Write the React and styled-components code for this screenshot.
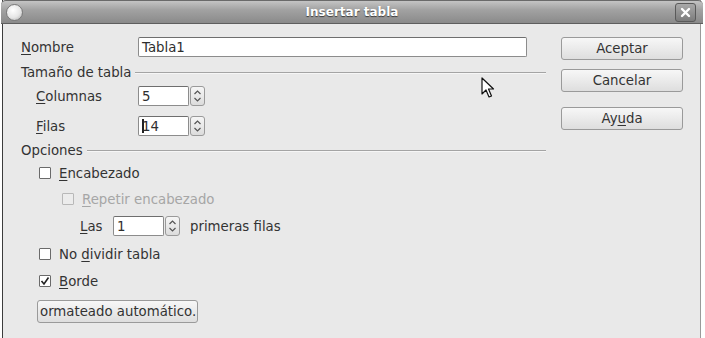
import React from 'react';
import styled, { createGlobalStyle } from 'styled-components';

const GlobalStyle = createGlobalStyle`
  html, body {
    margin: 0;
    padding: 0;
    background: #ffffff;
  }
  body {
    font-family: 'DejaVu Sans', 'Liberation Sans', sans-serif;
    font-size: 13.3px;
    color: #333333;
    width: 705px;
    height: 338px;
    overflow: hidden;
  }
`;

const Window = styled.div`
  margin-left: 2px;
  width: 699px;
  height: 338px;
  display: flex;
  flex-direction: column;
  border-left: 1px solid #3c3c3c;
  border-right: 1px solid #9a9a9a;
  box-sizing: border-box;
  background: #e9e9e9;
`;

const TitleBar = styled.div`
  height: 24px;
  flex: none;
  display: flex;
  align-items: center;
  justify-content: space-between;
  padding: 0 3px;
  box-sizing: border-box;
  background: linear-gradient(#c4c4c4 0%, #a2a2a2 40%, #8a8a8a 100%);
  border-top: 1px solid #6a6a6a;
  border-bottom: 1px solid #5e5e5e;
  border-radius: 5px 5px 0 0;
  margin-left: -2px;
  margin-right: -3px;
`;

const Title = styled.div`
  flex: 1;
  text-align: center;
  color: #ffffff;
  font-weight: bold;
  font-size: 12px;
  text-shadow: 0 1px 1px #3a3a3a;
  margin-left: 6px;
`;

const AppIcon = styled.div`
  width: 15px;
  height: 15px;
  border-radius: 50%;
  background: radial-gradient(circle at 40% 35%, #ffffff 0%, #e6e6e6 55%, #a8a8a8 100%);
  border: 1px solid #7a7a7a;
  margin-left: 2px;
`;

const CloseButton = styled.div`
  width: 21px;
  height: 19px;
  box-sizing: border-box;
  border: 1px solid #5a5a5a;
  border-radius: 3px;
  background: linear-gradient(#a9a9a9, #7c7c7c);
  display: flex;
  align-items: center;
  justify-content: center;
  margin-right: 4px;
`;

const Body = styled.div`
  flex: 1;
  display: flex;
  position: relative;
`;

const Main = styled.div`
  width: 543px;
  flex: none;
  display: flex;
  flex-direction: column;
  padding-left: 18px;
  box-sizing: border-box;
`;

const Side = styled.div`
  display: flex;
  flex-direction: column;
  padding-left: 15px;
  padding-top: 13px;
`;

const Row = styled.div`
  display: flex;
  align-items: center;
  height: ${(p) => p.$h || 16}px;
  margin-top: ${(p) => p.$top || 0}px;
  padding-left: ${(p) => p.$indent || 0}px;
  white-space: nowrap;
`;

const Label = styled.div`
  width: ${(p) => (p.$w ? `${p.$w}px` : 'auto')};
  flex: none;
  color: ${(p) => (p.$disabled ? '#a6a6a6' : '#333333')};
`;

const U = styled.span`
  text-decoration: underline;
  text-underline-offset: 2px;
`;

const TextField = styled.div`
  width: ${(p) => p.$w}px;
  height: 20px;
  box-sizing: border-box;
  background: #ffffff;
  border: 1px solid #8c8c8c;
  border-top-color: #6e6e6e;
  border-radius: 2px;
  display: flex;
  align-items: center;
  padding-left: 3px;
  color: #2e2e2e;
`;

const Caret = styled.span`
  display: inline-block;
  width: 2px;
  height: 14px;
  background: #222;
  margin-right: -2px;
`;

const SpinBox = styled.div`
  display: flex;
  align-items: stretch;
  gap: 1px;
  margin-right: ${(p) => p.$mr || 0}px;
`;

const SpinButton = styled.div`
  width: 15px;
  height: 20px;
  box-sizing: border-box;
  border: 1px solid #9a9a9a;
  border-radius: 3px;
  background: linear-gradient(#f6f6f6, #dcdcdc);
  display: flex;
  align-items: center;
  justify-content: center;
`;

const Section = styled.div`
  display: flex;
  align-items: center;
  height: 16px;
  margin-top: ${(p) => p.$top}px;
  gap: 4px;
`;

const SectionLine = styled.div`
  flex: 1;
  height: 1px;
  background: #a4a4a4;
  box-shadow: 0 1px 0 #f6f6f6;
`;

const CheckBox = styled.div`
  width: 12px;
  height: 12px;
  box-sizing: border-box;
  border: 1px solid ${(p) => (p.$disabled ? '#b8b8b8' : '#6a6a6a')};
  background: ${(p) => (p.$disabled ? '#ececec' : '#ffffff')};
  border-radius: 1px;
  margin-right: 8px;
  display: flex;
  align-items: center;
  justify-content: center;
  flex: none;
`;

const Button = styled.div`
  width: ${(p) => p.$w}px;
  height: 23px;
  margin-top: ${(p) => p.$top || 0}px;
  box-sizing: border-box;
  border: 1px solid #9a9a9a;
  border-radius: 3px;
  background: linear-gradient(#f7f7f7, #dedede);
  display: flex;
  align-items: center;
  justify-content: ${(p) => (p.$start ? 'flex-start' : 'center')};
  padding-left: ${(p) => (p.$start ? 2 : 0)}px;
  white-space: nowrap;
  color: #333333;
`;

const Cursor = styled.svg`
  position: absolute;
  left: 478px;
  top: 53px;
`;

const Spin = ({ value, w, mr, caret }) => (
  <SpinBox $mr={mr}>
    <TextField $w={w}>
      {caret && <Caret />}
      {value}
    </TextField>
    <SpinButton>
      <svg width="9" height="14" viewBox="0 0 9 14">
        <path d="M1.5 5 L4.5 2 L7.5 5" fill="none" stroke="#555" strokeWidth="1.2" />
        <path d="M1.5 9 L4.5 12 L7.5 9" fill="none" stroke="#555" strokeWidth="1.2" />
      </svg>
    </SpinButton>
  </SpinBox>
);

const Check = ({ checked, disabled }) => (
  <CheckBox $disabled={disabled}>
    {checked && (
      <svg width="10" height="10" viewBox="0 0 10 10">
        <path d="M1.5 5 L4 8 L8.5 1.5" fill="none" stroke="#222" strokeWidth="1.6" />
      </svg>
    )}
  </CheckBox>
);

export default function App() {
  return (
    <>
      <GlobalStyle />
      <Window>
        <TitleBar>
          <AppIcon />
          <Title>Insertar tabla</Title>
          <CloseButton>
            <svg width="11" height="11" viewBox="0 0 11 11">
              <path d="M2 2 L9 9 M9 2 L2 9" stroke="#ffffff" strokeWidth="2.4" strokeLinecap="round" />
            </svg>
          </CloseButton>
        </TitleBar>
        <Body>
          <Main>
            <Row $h={20} $top={13}>
              <Label $w={117}>
                <U>N</U>ombre
              </Label>
              <TextField $w={389}>Tabla1</TextField>
            </Row>
            <Section $top={7}>
              <span>Tamaño de tabla</span>
              <SectionLine />
            </Section>
            <Row $h={20} $top={6} $indent={15}>
              <Label $w={102}>
                <U>C</U>olumnas
              </Label>
              <Spin value="5" w={51} />
            </Row>
            <Row $h={20} $top={10} $indent={15}>
              <Label $w={102}>
                <U>F</U>ilas
              </Label>
              <Spin value="14" w={51} caret />
            </Row>
            <Section $top={6}>
              <span>Opciones</span>
              <SectionLine />
            </Section>
            <Row $top={7} $indent={18}>
              <Check />
              <span>
                <U>E</U>ncabezado
              </span>
            </Row>
            <Row $top={10} $indent={41}>
              <Check disabled />
              <Label $disabled>
                <U>R</U>epetir encabezado
              </Label>
            </Row>
            <Row $h={20} $top={9} $indent={59}>
              <Label $w={33}>
                <U>L</U>as
              </Label>
              <Spin value="1" w={51} mr={10} />
              <span>primeras filas</span>
            </Row>
            <Row $top={10} $indent={18}>
              <Check />
              <span>
                No <U>d</U>ividir tabla
              </span>
            </Row>
            <Row $top={11} $indent={18}>
              <Check checked />
              <span>
                <U>B</U>orde
              </span>
            </Row>
            <Row $h={23} $top={11} $indent={16}>
              <Button $w={161} $start>
                ormateado automático.
              </Button>
            </Row>
          </Main>
          <Side>
            <Button $w={122}>Aceptar</Button>
            <Button $w={122} $top={9}>
              Cancelar
            </Button>
            <Button $w={122} $top={15}>
              Ay<U>u</U>da
            </Button>
          </Side>
          <Cursor width="14" height="22" viewBox="0 0 14 22">
            <path
              d="M1 1 L1 17 L5 13 L8 20 L10.5 19 L7.5 12 L12.5 12 Z"
              fill="#ffffff"
              stroke="#111111"
              strokeWidth="1.2"
              strokeLinejoin="round"
            />
          </Cursor>
        </Body>
      </Window>
    </>
  );
}
